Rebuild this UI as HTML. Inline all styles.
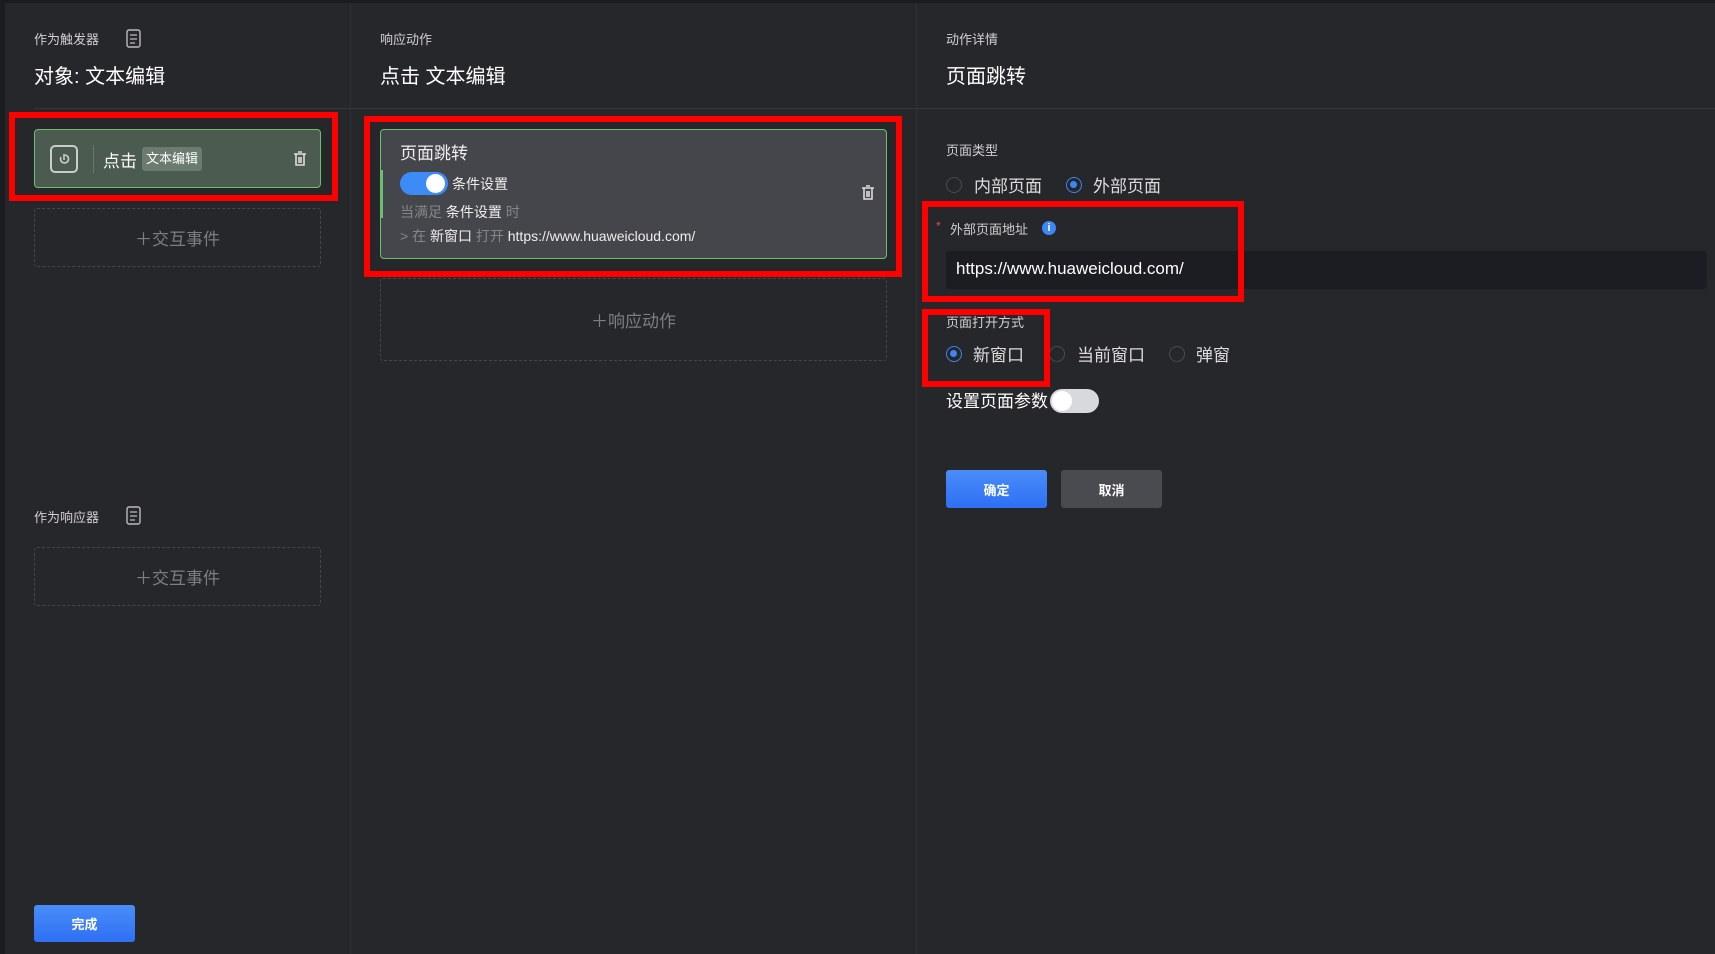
<!DOCTYPE html>
<html><head><meta charset="utf-8"><style>
*{box-sizing:border-box;margin:0;padding:0}
body{width:1715px;height:954px;background:#1b1c1f;font-family:"Liberation Sans","Noto Sans CJK SC",sans-serif;color:#e8e8e8;position:relative;overflow:hidden}
.main{position:absolute;left:5px;top:3px;right:0;bottom:0;background:#26272b}
.a{position:absolute;white-space:nowrap}
.vd{position:absolute;top:3px;bottom:0;width:1px;background:#303135}
.sm{font-size:13px;color:#d0d0d0}
.tt{font-size:20px;color:#fff}
.dash{position:absolute;border:1px dashed #45464a;border-radius:3px;color:#7d7e82;font-size:17px;display:flex;align-items:center;justify-content:center}
.red{position:absolute;border:6px solid #ff0000}
.rad{position:absolute;width:16px;height:16px;border-radius:50%;border:1px solid #4a4b50}
.rad.on{border:1.5px solid #3d86f5}
.rad.on::after{content:"";position:absolute;left:3px;top:3px;width:7px;height:7px;border-radius:50%;background:#3d86f5}
.btn{position:absolute;border-radius:3px;font-size:13px;font-weight:bold;color:#fff;display:flex;align-items:center;justify-content:center}
</style></head><body>
<div class="main"></div>
<div class="vd" style="left:350px"></div>
<div class="vd" style="left:916px"></div>
<div class="a" style="left:34px;top:108px;width:1681px;height:1px;background:#35363a"></div>

<!-- left column -->
<div class="a sm" style="left:34px;top:29px">作为触发器</div>
<svg class="a" style="left:126px;top:29px" width="16" height="20" viewBox="0 0 16 20"><rect x="1" y="1" width="13" height="17" rx="2" fill="none" stroke="#bbb" stroke-width="1.4"/><path d="M4 6h7M4 10h7M4 14h5" stroke="#bbb" stroke-width="1.3"/></svg>
<div class="a tt" style="left:34px;top:60px">对象: 文本编辑</div>

<div class="a" style="left:34px;top:129px;width:287px;height:59px;background:#4b5b4f;border:1px solid #6cbf6f;border-radius:4px"></div>
<div class="a" style="left:50px;top:145px;width:28px;height:28px;border:2px solid #ccc;border-radius:5px"></div>
<svg class="a" style="left:55px;top:150px" width="18" height="18" viewBox="0 0 18 18"><path d="M6 7a4 4 0 1 0 4-2" fill="none" stroke="#ccc" stroke-width="1.6"/><path d="M9 4v6" stroke="#ccc" stroke-width="1.6"/></svg>
<div class="a" style="left:93px;top:145px;width:1px;height:28px;background:#677a6b"></div>
<div class="a" style="left:103px;top:147px;font-size:17px;color:#fff">点击</div>
<div class="a" style="left:142px;top:147px;height:24px;padding:0 4px;background:#6b7b6e;border-radius:3px;font-size:13px;color:#fff;line-height:24px">文本编辑</div>
<svg class="a" style="left:292px;top:150px" width="16" height="18" viewBox="0 0 16 18"><path d="M2 4h12M6 2h4M4 4v11h8V4M7 7v6M9 7v6" fill="none" stroke="#ddd" stroke-width="1.6"/></svg>
<div class="red" style="left:9px;top:112px;width:329px;height:89px"></div>

<div class="dash" style="left:34px;top:208px;width:287px;height:59px">＋交互事件</div>
<div class="a sm" style="left:34px;top:507px">作为响应器</div>
<svg class="a" style="left:126px;top:506px" width="16" height="20" viewBox="0 0 16 20"><rect x="1" y="1" width="13" height="17" rx="2" fill="none" stroke="#bbb" stroke-width="1.4"/><path d="M4 6h7M4 10h7M4 14h5" stroke="#bbb" stroke-width="1.3"/></svg>
<div class="dash" style="left:34px;top:547px;width:287px;height:59px">＋交互事件</div>
<div class="btn" style="left:34px;top:905px;width:101px;height:37px;background:linear-gradient(#4a8df8,#2e6ff5)">完成</div>

<!-- middle -->
<div class="a sm" style="left:380px;top:29px">响应动作</div>
<div class="a tt" style="left:380px;top:60px">点击 文本编辑</div>
<div class="a" style="left:380px;top:129px;width:507px;height:130px;background:#45464b;border:1px solid #6cbf6f;border-radius:4px"></div>
<div class="a" style="left:380px;top:170px;width:3px;height:48px;background:#6cbf6f"></div>
<div class="a" style="left:400px;top:139px;font-size:17px;color:#eee">页面跳转</div>
<div class="a" style="left:400px;top:172px;width:48px;height:23px;border-radius:12px;background:#3d8bf7"></div>
<div class="a" style="left:426px;top:174px;width:19px;height:19px;border-radius:50%;background:#fff"></div>
<div class="a" style="left:452px;top:174px;font-size:14px;color:#eee">条件设置</div>
<div class="a" style="left:400px;top:202px;font-size:14px;color:#85868a">当满足 <span style="color:#eee">条件设置</span> 时</div>
<div class="a" style="left:400px;top:226px;font-size:14px;color:#85868a">&gt; 在 <span style="color:#eee">新窗口</span> 打开 <span style="color:#eee">https://www.huaweicloud.com/</span></div>
<svg class="a" style="left:860px;top:184px" width="16" height="18" viewBox="0 0 16 18"><path d="M2 4h12M6 2h4M4 4v11h8V4M7 7v6M9 7v6" fill="none" stroke="#ddd" stroke-width="1.6"/></svg>
<div class="red" style="left:364px;top:116px;width:538px;height:161px"></div>
<div class="dash" style="left:380px;top:278px;width:507px;height:83px">＋响应动作</div>

<!-- right -->
<div class="a sm" style="left:946px;top:29px">动作详情</div>
<div class="a tt" style="left:946px;top:60px">页面跳转</div>
<div class="a sm" style="left:946px;top:140px">页面类型</div>
<div class="rad" style="left:946px;top:177px"></div>
<div class="a" style="left:974px;top:172px;font-size:17px;color:#ddd">内部页面</div>
<div class="rad on" style="left:1066px;top:177px"></div>
<div class="a" style="left:1093px;top:172px;font-size:17px;color:#ddd">外部页面</div>
<div class="a" style="left:936px;top:219px;font-size:12px;color:#e05050">*</div>
<div class="a sm" style="left:950px;top:219px">外部页面地址</div>
<div class="a" style="left:1042px;top:221px;width:14px;height:14px;border-radius:50%;background:#3d86f5;color:#fff;font-size:11px;line-height:14px;text-align:center;font-weight:bold">i</div>
<div class="a" style="left:946px;top:251px;width:761px;height:38px;background:#1c1d23;border-radius:3px"></div>
<div class="a" style="left:956px;top:259px;font-size:17px;color:#fff">https://www.huaweicloud.com/</div>
<div class="red" style="left:922px;top:201px;width:322px;height:101px"></div>
<div class="a sm" style="left:946px;top:312px">页面打开方式</div>
<div class="rad on" style="left:946px;top:346px"></div>
<div class="a" style="left:973px;top:341px;font-size:17px;color:#ddd">新窗口</div>
<div class="rad" style="left:1049px;top:346px"></div>
<div class="a" style="left:1077px;top:341px;font-size:17px;color:#ddd">当前窗口</div>
<div class="rad" style="left:1169px;top:346px"></div>
<div class="a" style="left:1196px;top:341px;font-size:17px;color:#ddd">弹窗</div>
<div class="red" style="left:922px;top:309px;width:128px;height:78px"></div>
<div class="a" style="left:946px;top:387px;font-size:17px;color:#fff">设置页面参数</div>
<div class="a" style="left:1050px;top:389px;width:49px;height:24px;border-radius:12px;background:#d8d9dd"></div>
<div class="a" style="left:1052px;top:391px;width:20px;height:20px;border-radius:50%;background:#fff"></div>
<div class="btn" style="left:946px;top:470px;width:101px;height:38px;background:linear-gradient(#4a8df8,#2e6ff5)">确定</div>
<div class="btn" style="left:1061px;top:470px;width:101px;height:38px;background:#4a4b50">取消</div>
</body></html>
